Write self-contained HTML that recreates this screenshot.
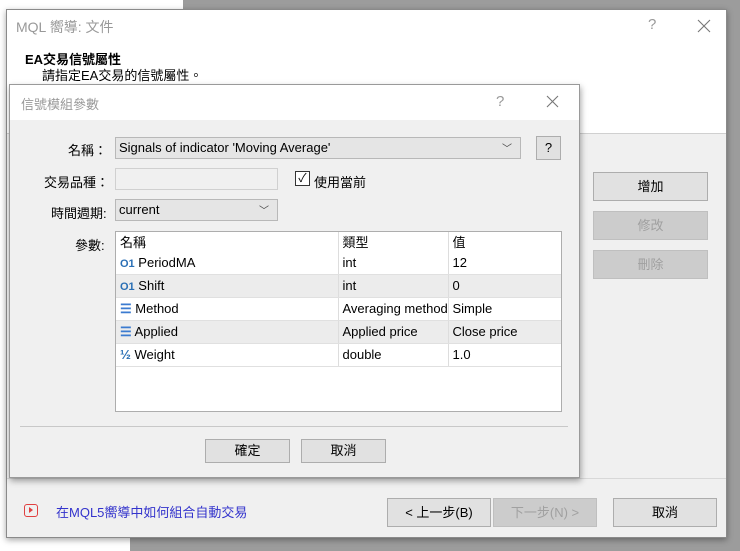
<!DOCTYPE html>
<html><head><meta charset="utf-8"><style>
*{box-sizing:border-box;margin:0;padding:0}
body{width:740px;height:551px;position:relative;overflow:hidden;background:#fff;font-family:"Liberation Sans","Noto Sans CJK TC",sans-serif;font-size:13px;color:#000}
.a{position:absolute}
.btn{position:absolute;background:#e1e1e1;border:1px solid #adadad;text-align:center;font-size:13px}
.dis{background:#cccccc;border-color:#bfbfbf;color:#a0a0a0}
table{border-collapse:collapse;width:100%;table-layout:fixed}
td{height:23px;padding:0 4px;border-right:1px solid #ddd;white-space:nowrap;overflow:hidden;font-size:13px}
tr.g td{background:#ececec}
tr.l td{border-bottom:1px solid #e0e0e0}
</style></head><body>
<div class="a" style="left:183px;top:0;width:557px;height:551px;background:#9c9c9c"></div>
<div class="a" style="left:130px;top:538px;width:610px;height:13px;background:#9c9c9c"></div>
<!-- outer dialog -->
<div class="a" style="left:6px;top:9px;width:721px;height:529px;background:#f0f0f0;border:1px solid #8a8a8a;box-shadow:0 2px 6px rgba(0,0,0,.35)">
 <div class="a" style="left:0;top:0;width:719px;height:124px;background:#fff;border-bottom:1px solid #d0d0d0"></div>
 <div class="a" style="left:9px;top:7px;color:#999;font-size:14px">MQL 嚮導: 文件</div>
 <div class="a" style="left:641px;top:6px;color:#999;font-size:15px">?</div>
 <svg class="a" style="left:690px;top:9px" width="14" height="14"><path d="M1 1L13 13M13 1L1 13" stroke="#777" stroke-width="1.1"/></svg>
 <div class="a" style="left:18px;top:39px;font-weight:bold;font-size:13px">EA交易信號屬性</div>
 <div class="a" style="left:35px;top:55px;font-size:13px">請指定EA交易的信號屬性。</div>
 <div class="btn" style="left:586px;top:162px;width:115px;height:29px;line-height:27px">增加</div>
 <div class="btn dis" style="left:586px;top:201px;width:115px;height:29px;line-height:27px">修改</div>
 <div class="btn dis" style="left:586px;top:240px;width:115px;height:29px;line-height:27px">刪除</div>
 <div class="a" style="left:0;top:468px;width:719px;border-top:1px solid #d8d8d8"></div>
 <div class="a" style="left:17px;top:494px;width:14px;height:13px;border:1.5px solid #e04040;border-radius:3px"><div class="a" style="left:4px;top:2px;width:0;height:0;border-left:4px solid #e04040;border-top:3px solid transparent;border-bottom:3px solid transparent"></div></div>
 <div class="a" style="left:49px;top:492px;color:#3333cc;font-size:13px">在MQL5嚮導中如何組合自動交易</div>
 <div class="btn" style="left:380px;top:488px;width:104px;height:29px;line-height:27px">&lt; 上一步(B)</div>
 <div class="btn dis" style="left:486px;top:488px;width:104px;height:29px;line-height:27px">下一步(N) &gt;</div>
 <div class="btn" style="left:606px;top:488px;width:104px;height:29px;line-height:27px">取消</div>
</div>
<!-- inner dialog -->
<div class="a" style="left:9px;top:84px;width:571px;height:394px;background:#f0f0f0;border:1px solid #9a9a9a;box-shadow:1px 3px 6px rgba(0,0,0,.35)">
 <div class="a" style="left:0;top:0;width:569px;height:35px;background:#fff"></div>
 <div class="a" style="left:11px;top:9px;color:#999;font-size:13px">信號模組參數</div>
 <div class="a" style="left:486px;top:8px;color:#999;font-size:15px">?</div>
 <svg class="a" style="left:536px;top:10px" width="13" height="13"><path d="M1 1L12 12M12 1L1 12" stroke="#777" stroke-width="1.1"/></svg>
 <div class="a" style="left:58px;top:55px">名稱：</div>
 <div class="a" style="left:105px;top:52px;width:406px;height:22px;background:#e5e5e5;border:1px solid #b8b8b8;padding:2px 3px">Signals of indicator 'Moving Average'<span class="a" style="right:8px;top:2px;font-size:10px;color:#444">﹀</span></div>
 <div class="btn" style="left:526px;top:51px;width:25px;height:24px;line-height:22px">?</div>
 <div class="a" style="left:34px;top:87px">交易品種：</div>
 <div class="a" style="left:105px;top:83px;width:163px;height:22px;background:#f0f0f0;border:1px solid #d0d0d0"></div>
 <div class="a" style="left:285px;top:86px;width:15px;height:15px;border:1px solid #333;background:#fff;font-size:12px;line-height:13px;text-align:center">✓</div>
 <div class="a" style="left:304px;top:87px">使用當前</div>
 <div class="a" style="left:41px;top:118px">時間週期:</div>
 <div class="a" style="left:105px;top:114px;width:163px;height:22px;background:#e5e5e5;border:1px solid #b8b8b8;padding:2px 3px">current<span class="a" style="right:8px;top:2px;font-size:10px;color:#444">﹀</span></div>
 <div class="a" style="left:65px;top:150px">參數:</div>
 <div class="a" style="left:105px;top:146px;width:447px;height:181px;background:#fff;border:1px solid #adadad">
  <table>
   <tr><td style="width:222px;height:19px">名稱</td><td style="width:110px;height:19px">類型</td><td style="border:0;height:19px">值</td></tr>
   <tr class="l"><td><span style="color:#2a6fb5;font-size:11px;font-weight:bold">O1</span> PeriodMA</td><td>int</td><td style="border-right:0">12</td></tr>
   <tr class="g l"><td><span style="color:#2a6fb5;font-size:11px;font-weight:bold">O1</span> Shift</td><td>int</td><td style="border-right:0">0</td></tr>
   <tr class="l"><td><span style="color:#3b7bd0;font-weight:bold">☰</span> Method</td><td>Averaging method</td><td style="border-right:0">Simple</td></tr>
   <tr class="g l"><td><span style="color:#3b7bd0;font-weight:bold">☰</span> Applied</td><td>Applied price</td><td style="border-right:0">Close price</td></tr>
   <tr class="l"><td><span style="color:#2a6fb5;font-weight:bold">½</span> Weight</td><td>double</td><td style="border-right:0">1.0</td></tr>
  </table>
 </div>
 <div class="a" style="left:10px;top:341px;width:548px;border-top:1px solid #c8c8c8"></div>
 <div class="btn" style="left:195px;top:354px;width:85px;height:24px;line-height:22px">確定</div>
 <div class="btn" style="left:291px;top:354px;width:85px;height:24px;line-height:22px">取消</div>
</div>
</body></html>
